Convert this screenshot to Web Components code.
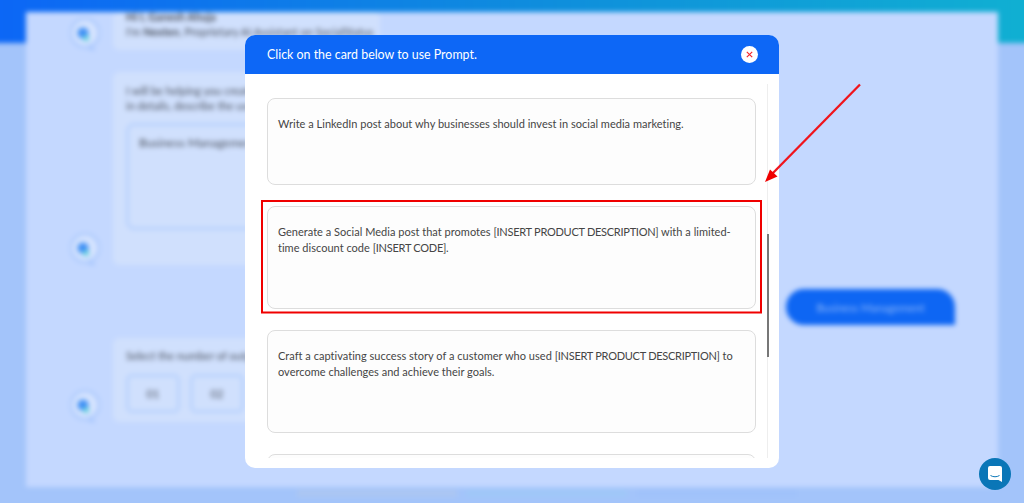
<!DOCTYPE html>
<html lang="en">
<head>
<meta charset="utf-8">
<title>Prompt picker</title>
<style>
    html, body { margin: 0; height: 100%; overflow: hidden; background: #a3c4fa; }
    prompt-card span { letter-spacing: -.27px; }
</style>
</head>
<body>
<app-backdrop>
    <chat-row style="--row-h:38px; --gap:22px; --first:-3px">
        <div class="t1"><b>Hi I, Ganesh Ahuja</b></div>
        <div class="t1">I'm <b>Nexten</b>, Proprietary AI Assistant on SocialStatus</div>
    </chat-row>
    <chat-row style="--row-h:193px; --gap:24px; --first:11px">
        <div class="t1">I will be helping you create</div>
        <div class="t1">in details, describe the use</div>
        <div class="box">Business Management</div>
    </chat-row>
    <user-bubble>Business Management</user-bubble>
    <chat-row style="--row-h:84px; --gap:0; --first:10px">
        <div class="t1">Select the number of outputs</div>
        <div class="opts"><span>01</span><span>02</span></div>
    </chat-row>
</app-backdrop>

<prompt-modal title-text="Click on the card below to use Prompt.">
    <prompt-card style="--h:87px">Write a LinkedIn post about why businesses should invest in social media marketing.</prompt-card>
    <prompt-card style="--h:103px">Generate a Social Media post that promotes <span>[INSERT PRODUCT DESCRIPTION]</span> with a limited-<br>time discount code <span>[INSERT CODE]</span>.</prompt-card>
    <prompt-card style="--h:103px">Craft a captivating success story of a customer who used <span>[INSERT PRODUCT DESCRIPTION]</span> to<br>overcome challenges and achieve their goals.</prompt-card>
    <prompt-card style="--h:103px"></prompt-card>
</prompt-modal>

<red-annotation></red-annotation>
<chat-launcher></chat-launcher>

<script>
class AppBackdrop extends HTMLElement {
    connectedCallback() {
        this.attachShadow({ mode: 'open' });
        this.shadowRoot.innerHTML = `
            <style>
                :host {
                    display: flex;
                    flex-direction: column;
                    box-sizing: border-box;
                    height: 519px;
                    margin: -8px;
                    padding: 20px 34px 0;
                    filter: blur(2.5px);
                    font-family: "Lato", sans-serif;
                    background:
                        linear-gradient(90deg, #0c66f6 0%, #0f8fdc 55%, #10b0d2 100%) top / 100% 51px no-repeat,
                        #a3c4fa;
                }
                .panel {
                    height: 475px;
                    overflow: hidden;
                    background: #c4d8ff;
                    display: flex;
                    flex-direction: column;
                }
                .foot {
                    display: flex;
                    gap: 10px;
                    padding: 3px 0 0 271px;
                }
                .foot i {
                    display: block;
                    width: 160px;
                    height: 7px;
                    background: #acc6f2;
                }
                .foot i + i { background: #9fc8f8; }
                .foot i + i + i { background: #a0c2fa; }
            </style>
            <div class="panel"><slot></slot></div>
            <div class="foot"><i></i><i></i><i></i></div>
        `;
    }
}

class ChatRow extends HTMLElement {
    connectedCallback() {
        this.attachShadow({ mode: 'open' });
        this.shadowRoot.innerHTML = `
            <style>
                :host {
                    display: flex;
                    flex: none;
                    align-items: flex-end;
                    gap: 13px;
                    height: var(--row-h);
                    margin-bottom: var(--gap);
                    padding-left: 44px;
                }
                svg { flex: none; margin-bottom: -2px; }
                .card {
                    box-sizing: border-box;
                    width: 267px;
                    height: 100%;
                    padding: 0 13px;
                    background: #d0e0fd;
                    border-radius: 6px;
                    overflow: hidden;
                    font-size: 11px;
                    line-height: 15px;
                    color: #4a505c;
                }
                ::slotted(.t1) { white-space: nowrap; }
                ::slotted(.t1:first-child) { margin-top: var(--first); }
                ::slotted(.box) {
                    box-sizing: border-box;
                    height: 107px;
                    margin: 10px 0 0;
                    padding: 9px 10px;
                    border: 3px solid #b9d2fd;
                    border-radius: 8px;
                    font-size: 12px;
                    white-space: nowrap;
                }
                ::slotted(.opts) {
                    display: flex;
                    gap: 10px;
                    margin-top: 11px;
                }
            </style>
            <svg width="30" height="34" viewBox="0 0 30 34">
                <path d="M21 27l5 6-9-2z" fill="#a4c4fd"/>
                <circle cx="15" cy="15" r="14" fill="#d6e4fe" stroke="#aecbfd" stroke-width="3"/>
                <circle cx="13" cy="15" r="5.500" fill="#3f8ff5"/>
                <circle cx="16" cy="20" r="3" fill="#5fd0dc"/>
            </svg>
            <div class="card"><slot></slot></div>
        `;
        // the option chips are light DOM, so they get their look here
        this.querySelectorAll('.opts span').forEach(chip => {
            chip.style.cssText = 'box-sizing:border-box;width:54px;height:39px;border:3px solid #b9d2fd;border-radius:6px;display:flex;align-items:center;justify-content:center';
        });
    }
}

class UserBubble extends HTMLElement {
    connectedCallback() {
        this.attachShadow({ mode: 'open' });
        this.shadowRoot.innerHTML = `
            <style>
                :host {
                    display: flex;
                    flex: none;
                    align-items: center;
                    justify-content: center;
                    align-self: flex-end;
                    box-sizing: border-box;
                    width: 169px;
                    height: 36px;
                    margin: 0 43px 13px 0;
                    background: #0e66f3;
                    color: #8fb8fa;
                    border-radius: 18px 18px 0 18px;
                    font-size: 11px;
                }
            </style>
            <slot></slot>
        `;
    }
}

class PromptModal extends HTMLElement {
    connectedCallback() {
        this.attachShadow({ mode: 'open' });
        this.shadowRoot.innerHTML = `
            <style>
                :host {
                    position: fixed;
                    inset: 0;
                    display: flex;
                    align-items: center;
                    justify-content: center;
                    font-family: "Lato", sans-serif;
                }
                .dialog {
                    display: flex;
                    flex-direction: column;
                    width: 534px;
                    height: 433px;
                    background: #fff;
                    border-radius: 10px;
                    overflow: hidden;
                }
                header {
                    flex: none;
                    display: flex;
                    align-items: center;
                    justify-content: space-between;
                    height: 39px;
                    padding: 0 21px 0 22px;
                    background: #0d67f6;
                    color: #fff;
                    font-size: 12.4px;
                }
                .close {
                    display: flex;
                    align-items: center;
                    justify-content: center;
                    width: 17px;
                    height: 17px;
                    background: #fff;
                    border-radius: 50%;
                }
                .body {
                    flex: 1;
                    min-height: 0;
                    display: flex;
                    gap: 11px;
                    padding: 10px 11px 10px 22px;
                }
                .list {
                    flex: 1;
                    min-width: 0;
                    display: flex;
                    flex-direction: column;
                    gap: 21px;
                    padding-top: 14px;
                    overflow: hidden;
                }
                .track {
                    flex: none;
                    width: 1px;
                    background: #eeeeee;
                    padding-top: 150px;
                    box-sizing: border-box;
                }
                .thumb {
                    width: 2px;
                    height: 123px;
                    background: #777;
                }
            </style>
            <div class="dialog">
                <header>
                    <span>${this.getAttribute('title-text')}</span>
                    <span class="close">
                        <svg width="7" height="7" viewBox="0 0 7 7"><path d="M.8.8l5.4 5.4M6.200.8L.8 6.200" stroke="#f5262c" stroke-width="1.150"/></svg>
                    </span>
                </header>
                <div class="body">
                    <div class="list"><slot></slot></div>
                    <div class="track"><div class="thumb"></div></div>
                </div>
            </div>
        `;
    }
}

class PromptCard extends HTMLElement {
    connectedCallback() {
        this.attachShadow({ mode: 'open' });
        this.shadowRoot.innerHTML = `
            <style>
                :host {
                    display: block;
                    flex: none;
                    box-sizing: border-box;
                    height: var(--h);
                    padding: 17px 10px 0;
                    background: #fdfdfd;
                    border: 1px solid #dddddd;
                    border-radius: 8px;
                    color: #454545;
                    font-size: 11px;
                    letter-spacing: .02px;
                    line-height: 16px;
                }
            </style>
            <slot></slot>
        `;
    }
}

class RedAnnotation extends HTMLElement {
    connectedCallback() {
        this.attachShadow({ mode: 'open' });
        this.shadowRoot.innerHTML = `
            <style>
                :host { position: fixed; inset: 0; pointer-events: none; }
                svg { display: block; }
            </style>
            <svg width="1024" height="503" viewBox="0 0 1024 503" fill="none">
                <rect x="262" y="201" width="499" height="111.500" stroke="#f00000" stroke-width="2"/>
                <path d="M860 84.500L771 175" stroke="#f0141c" stroke-width="2.300"/>
                <path d="M765 182l5-12.500 7.500 7z" fill="#f00000"/>
            </svg>
        `;
    }
}

class ChatLauncher extends HTMLElement {
    connectedCallback() {
        this.attachShadow({ mode: 'open' });
        this.shadowRoot.innerHTML = `
            <style>
                :host {
                    position: fixed;
                    right: 13px;
                    bottom: 13px;
                    display: flex;
                    align-items: center;
                    justify-content: center;
                    width: 32px;
                    height: 32px;
                    background: #0a76b7;
                    border-radius: 50%;
                }
            </style>
            <svg width="14" height="16" viewBox="0 0 14 16">
                <path d="M2 0h10a2 2 0 0 1 2 2v14l-3.500-2H2a2 2 0 0 1-2-2V2a2 2 0 0 1 2-2z" fill="#fff"/>
                <path d="M2.500 9.500c2.800 1.700 6.200 1.700 9 0" stroke="#0a76b7" stroke-width="1" fill="none"/>
            </svg>
        `;
    }
}

customElements.define('app-backdrop', AppBackdrop);
customElements.define('chat-row', ChatRow);
customElements.define('user-bubble', UserBubble);
customElements.define('prompt-modal', PromptModal);
customElements.define('prompt-card', PromptCard);
customElements.define('red-annotation', RedAnnotation);
customElements.define('chat-launcher', ChatLauncher);
</script>
</body>
</html>
